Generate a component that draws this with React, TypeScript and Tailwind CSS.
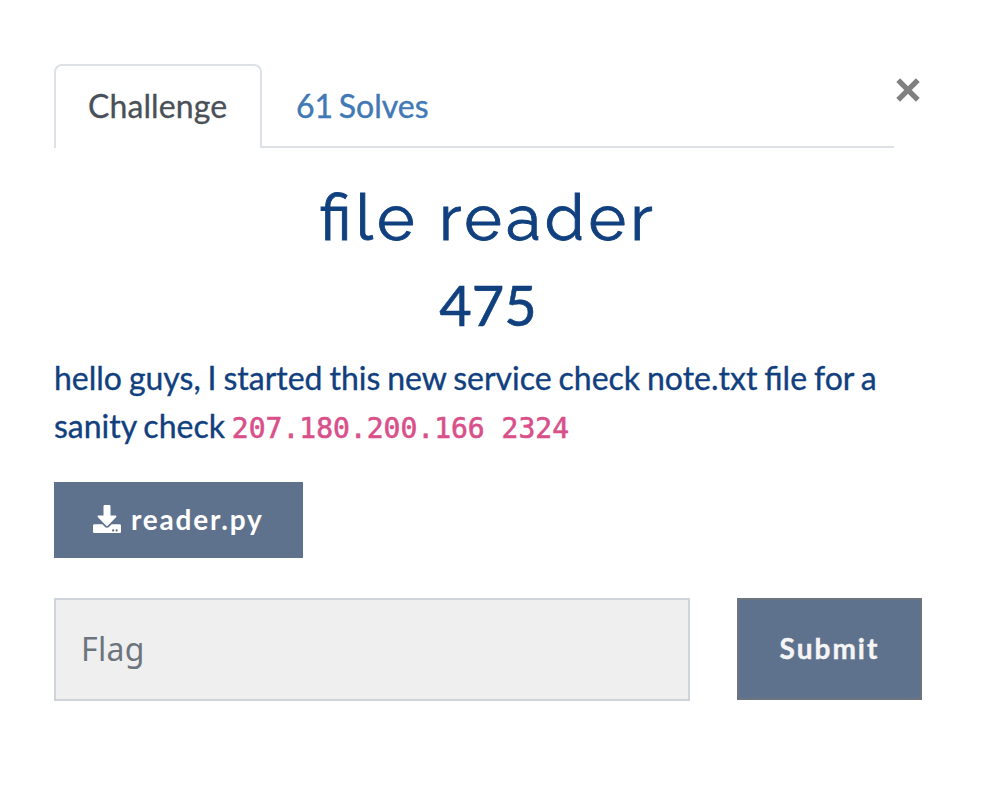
import { FaDownload } from "react-icons/fa";

export default function App() {
  return (
    <div className="h-[790px] w-[984px] overflow-hidden bg-white pl-[54px] pt-16 font-[Lato,sans-serif] text-[#11407f]">
      <div className="flex">
        <div className="flex w-[840px]">
          <div className="flex h-[84px] w-[208px] items-center rounded-t-lg border-2 border-b-0 border-[#dee2e6] pb-0.5 pl-8 text-[32px] tracking-[0.1px] text-[#495057] [-webkit-text-stroke:0.3px_#495057]">Challenge</div>
          <div className="flex h-[84px] flex-1 items-center border-b-2 border-[#dee2e6] pl-[34px] pt-0.5 text-[32px] text-[#4179b6] [word-spacing:-2.5px] [-webkit-text-stroke:0.4px_#4179b6]">61 Solves</div>
        </div>
        <button aria-label="Close" className="ml-0.5 mt-[14px] h-6 w-6 text-[#808080]">
          <svg viewBox="0 0 24 24" className="h-6 w-6" stroke="currentColor" strokeWidth="5.4">
            <path d="M2.2 2.2 21.8 21.8M21.8 2.2 2.2 21.8" />
          </svg>
        </button>
      </div>
      <h1 className="mt-9 w-[868px] text-center text-[64px] font-normal leading-[68px] tracking-[4px] font-['Raleway','Lato',sans-serif] [font-feature-settings:'liga'_1] [-webkit-text-stroke:0.9px_#11407f]">file reader</h1>
      <h2 className="mt-[17px] w-[868px] text-center text-[56px] font-normal leading-[72px] [-webkit-text-stroke:0.6px_#11407f]">475</h2>
      <p className="mt-[13px] w-[868px] whitespace-nowrap text-[32px] leading-[48px] [word-spacing:-1.3px] [-webkit-text-stroke:0.35px_#11407f]">hello guys, I started this new service check note.txt file for a<br />sanity check <code className="font-['DejaVu_Sans_Mono',monospace] text-[28px] text-[#d94f8a] [word-spacing:0px] [-webkit-text-stroke:0.6px_#d94f8a]">207.180.200.166 2324</code></p>
      <button className="mt-[29px] flex h-[76px] w-[249px] items-center bg-[#5f728d] pb-0.5 pl-[39px] text-[28px] font-bold tracking-[1.8px] text-white"><FaDownload className="mr-[10px]" />reader.py</button>
      <div className="mt-10 flex gap-[47px]">
        <div className="flex h-[103px] w-[636px] items-center border-2 border-[#ced4da] bg-[#efefef] pb-0.5 pl-[25px] font-['Noto_Sans',sans-serif] text-[32px] tracking-[0.3px] text-[#6c757d]">Flag</div>
        <button className="h-[102px] w-[185px] border-2 border-[#6c757d] bg-[#5f728d] pb-0.5 text-[28px] font-bold tracking-[2px] text-[#f5f5f5] [-webkit-text-stroke:0.4px_#f5f5f5]">Submit</button>
      </div>
    </div>
  );
}
